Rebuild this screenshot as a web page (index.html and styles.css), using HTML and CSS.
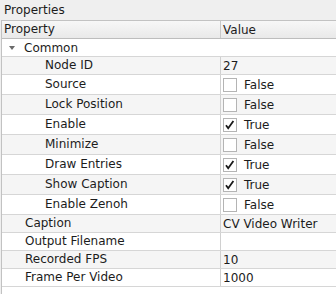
FILE: index.html
```html
<!DOCTYPE html>
<html>
<head>
<meta charset="utf-8">
<link rel="stylesheet" href="styles.css">
</head>
<body>
<div class="panel">
  <div class="title">Properties</div>
  <div class="tree">
    <div class="row head"><div class="c1">Property</div><div class="c2">Value</div></div>
    <div class="row group"><span class="arrow"></span><span>Common</span></div>
    <div class="row alt"><div class="c1 l2">Node ID</div><div class="c2">27</div></div>
    <div class="row tall"><div class="c1 l2">Source</div><div class="c2"><span class="cb"></span>False</div></div>
    <div class="row tall alt"><div class="c1 l2">Lock Position</div><div class="c2"><span class="cb"></span>False</div></div>
    <div class="row tall"><div class="c1 l2">Enable</div><div class="c2"><span class="cb"><svg viewBox="0 0 14 14" width="14" height="14"><path d="M3 7.2 L5.2 10.2 L10.4 3" fill="none" stroke="#1a1a1a" stroke-width="1.8"/></svg></span>True</div></div>
    <div class="row tall alt"><div class="c1 l2">Minimize</div><div class="c2"><span class="cb"></span>False</div></div>
    <div class="row tall"><div class="c1 l2">Draw Entries</div><div class="c2"><span class="cb"><svg viewBox="0 0 14 14" width="14" height="14"><path d="M3 7.2 L5.2 10.2 L10.4 3" fill="none" stroke="#1a1a1a" stroke-width="1.8"/></svg></span>True</div></div>
    <div class="row tall alt"><div class="c1 l2">Show Caption</div><div class="c2"><span class="cb"><svg viewBox="0 0 14 14" width="14" height="14"><path d="M3 7.2 L5.2 10.2 L10.4 3" fill="none" stroke="#1a1a1a" stroke-width="1.8"/></svg></span>True</div></div>
    <div class="row tall"><div class="c1 l2">Enable Zenoh</div><div class="c2"><span class="cb"></span>False</div></div>
    <div class="row alt"><div class="c1 l1">Caption</div><div class="c2">CV Video Writer</div></div>
    <div class="row"><div class="c1 l1">Output Filename</div><div class="c2"></div></div>
    <div class="row alt"><div class="c1 l1">Recorded FPS</div><div class="c2">10</div></div>
    <div class="row"><div class="c1 l1">Frame Per Video</div><div class="c2">1000</div></div>
  </div>
</div>
</body>
</html>
```
FILE: styles.css
```css
html, body {
  margin: 0;
  padding: 0;
  background: #efefef;
}
.panel {
  width: 336px;
  height: 294px;
  display: flex;
  flex-direction: column;
  font-family: "DejaVu Sans", sans-serif;
  font-size: 12px;
  color: #1c1c1c;
  overflow: hidden;
}
.title {
  height: 20px;
  line-height: 20px;
  padding-left: 4px;
  background: #efefef;
}
.tree {
  flex: 1;
  margin-left: 1px;
  border-left: 1px solid #c2c2c2;
  border-top: 1px solid #c2c2c2;
  background: #ffffff;
}
.row {
  display: flex;
  height: 18px;
  box-sizing: border-box;
  border-bottom: 1px solid #d6d6d6;
  line-height: 16px;
}
.row.tall {
  height: 20px;
  line-height: 18px;
}
.row.alt {
  background: #f5f5f5;
}
.row.head {
  background: linear-gradient(#f7f7f7, #e9e9e9);
  border-bottom: 1px solid #bdbdbd;
  height: 18px;
}
.c1 {
  width: 218px;
  flex: none;
  box-sizing: border-box;
  padding-left: 2px;
  white-space: nowrap;
}
.c1.l1 { padding-left: 23px; }
.c1.l2 { padding-left: 43px; }
.c2 {
  flex: 1;
  border-left: 1px solid #d0d0d0;
  padding-left: 2px;
  display: flex;
  align-items: center;
  white-space: nowrap;
}
.head .c2 { border-left-color: #c8c8c8; }
.group {
  align-items: center;
}
.arrow {
  width: 0;
  height: 0;
  margin-left: 7px;
  margin-right: 9px;
  border-left: 3.5px solid transparent;
  border-right: 3.5px solid transparent;
  border-top: 4px solid #6a6a6a;
}
.cb {
  width: 14px;
  height: 14px;
  box-sizing: border-box;
  border: 1px solid #b4b4b4;
  background: #fff;
  margin-right: 7px;
  display: flex;
  align-items: center;
  justify-content: center;
  position: relative;
}
.cb svg {
  position: absolute;
  left: -1px;
  top: -1px;
}
```
